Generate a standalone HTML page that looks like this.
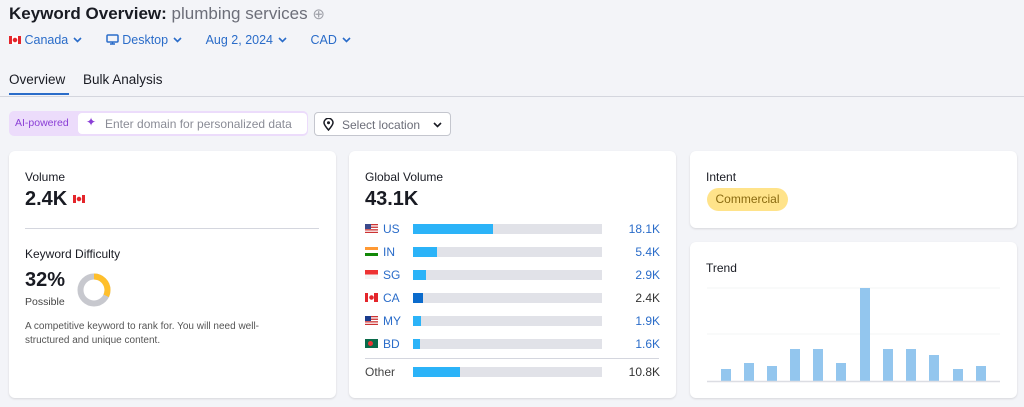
<!DOCTYPE html>
<html><head><meta charset="utf-8"><style>
*{margin:0;padding:0;box-sizing:border-box}
body{width:1024px;height:407px;background:#f3f4f8;font-family:"Liberation Sans",sans-serif;color:#191b23;position:relative;overflow:hidden}
.a{position:absolute}
.card{position:absolute;background:#fff;border-radius:6px;box-shadow:0 1px 2px rgba(0,0,0,.12)}
.blue{color:#2a6cc9}
.flag-ca{display:inline-block;width:12px;height:8px;background:radial-gradient(circle at 50% 50%,#e4252b 0 2px,transparent 2.5px),linear-gradient(90deg,#e4252b 0 3px,#fff 3px 9px,#e4252b 9px)}
.row{position:absolute;left:16px;width:295px;height:14px;font-size:12px}
.bar{position:absolute;left:48px;top:2px;width:189px;height:10px;background:#e1e2e8}
.bar i{position:absolute;left:0;top:0;height:10px;background:#2bb3f8}
.val{position:absolute;right:0;top:0;text-align:right;color:#2a6cc9}
.fl{position:absolute;left:0;top:2px;width:13px;height:9px}
.cc{position:absolute;left:18px;top:0;color:#2a6cc9}
.chev{display:inline-block;vertical-align:1px;margin-left:5px}
</style></head><body>
<div class="a" style="left:9px;top:4px;font-size:17px;font-weight:bold">Keyword Overview: <span style="color:#6c6e79;font-weight:normal">plumbing services</span> <span style="color:#a0a2aa;font-size:15px;font-weight:normal">⊕</span></div>
<div class="a blue" style="left:9px;top:33px;font-size:12.5px;white-space:nowrap">
<span class="flag-ca"></span> Canada<svg class="chev" width="9" height="6"><path d="M1 1l3.5 3.5L8 1" fill="none" stroke="#2a6cc9" stroke-width="1.6"/></svg>
<span style="margin-left:20px"><svg width="13" height="11" style="vertical-align:-1px"><rect x="1" y="1" width="11" height="7" rx="1" fill="none" stroke="#2a6cc9" stroke-width="1.5"/><path d="M4 10h5M6.5 8v2" stroke="#2a6cc9" stroke-width="1.5"/></svg> Desktop<svg class="chev" width="9" height="6"><path d="M1 1l3.5 3.5L8 1" fill="none" stroke="#2a6cc9" stroke-width="1.6"/></svg></span>
<span style="margin-left:20px">Aug 2, 2024<svg class="chev" width="9" height="6"><path d="M1 1l3.5 3.5L8 1" fill="none" stroke="#2a6cc9" stroke-width="1.6"/></svg></span>
<span style="margin-left:20px">CAD<svg class="chev" width="9" height="6"><path d="M1 1l3.5 3.5L8 1" fill="none" stroke="#2a6cc9" stroke-width="1.6"/></svg></span></div>
<div class="a" style="left:9px;top:72px;font-size:13.5px">Overview</div>
<div class="a" style="left:83px;top:72px;font-size:13.5px">Bulk Analysis</div>
<div class="a" style="left:9px;top:93px;width:60px;height:2px;background:#2a6cc9"></div>
<div class="a" style="left:0;top:96px;width:1024px;height:1px;background:#d4d6de"></div>
<div class="a" style="left:9px;top:111px;width:299px;height:25px;background:#ecdcfb;border-radius:5px"></div>
<div class="a" style="left:15px;top:117px;font-size:10.5px;color:#8a3ed6">AI-powered</div>
<div class="a" style="left:78px;top:113px;width:229px;height:21px;background:#fff;border-radius:4px;font-size:12px;color:#8a8c96;padding:4px 0 0 27px"><span style="position:absolute;left:8px;top:2px;color:#8a3ed6">✦</span>Enter domain for personalized data</div>
<div class="a" style="left:314px;top:112px;width:137px;height:24px;background:#fff;border:1px solid #c4c6ce;border-radius:4px;font-size:12px;color:#6c6e79;padding:5px 0 0 27px"><svg style="position:absolute;left:8px;top:5px" width="11" height="13"><path d="M5.5 12C2 8 1 6.5 1 4.8a4.5 4.5 0 0 1 9 0c0 1.7-1 3.2-4.5 7.2z" fill="none" stroke="#191b23" stroke-width="1.5"/><circle cx="5.5" cy="4.8" r="1.5" fill="#191b23"/></svg>Select location<svg style="position:absolute;right:8px;top:9px" width="9" height="6"><path d="M1 1l3.5 3.5L8 1" fill="none" stroke="#191b23" stroke-width="1.6"/></svg></div>

<div class="card" style="left:9px;top:151px;width:327px;height:247px">
<div class="a" style="left:16px;top:19px;font-size:12px">Volume</div>
<div class="a" style="left:16px;top:37px;font-size:20px;font-weight:bold">2.4K <span class="flag-ca" style="vertical-align:2px"></span></div>
<div class="a" style="left:16px;top:77px;width:294px;height:1px;background:#d4d6de"></div>
<div class="a" style="left:16px;top:96px;font-size:12px">Keyword Difficulty</div>
<div class="a" style="left:16px;top:118px;font-size:20px;font-weight:bold">32%</div>
<div class="a" style="left:16px;top:145px;font-size:10.5px;color:#444">Possible</div>
<svg class="a" style="left:67px;top:121px" width="36" height="36"><circle cx="18" cy="18" r="13.5" fill="none" stroke="#c7c8ce" stroke-width="6"/><circle cx="18" cy="18" r="13.5" fill="none" stroke="#ffbf2b" stroke-width="6" stroke-dasharray="27.1 100" transform="rotate(-90 18 18)"/></svg>
<div class="a" style="left:16px;top:169px;font-size:10px;color:#555;line-height:14px;width:270px">A competitive keyword to rank for. You will need well-structured and unique content.</div>
</div>

<div class="card" style="left:349px;top:151px;width:327px;height:247px">
<div class="a" style="left:16px;top:19px;font-size:12px">Global Volume</div>
<div class="a" style="left:16px;top:37px;font-size:20px;font-weight:bold">43.1K</div>
<div class="row" style="top:71px"><svg class="fl" viewBox="0 0 13 9"><rect width="13" height="9" fill="#c33"/><rect y="1.3" width="13" height="1.3" fill="#fff"/><rect y="3.9" width="13" height="1.3" fill="#fff"/><rect y="6.5" width="13" height="1.3" fill="#fff"/><rect width="6" height="5" fill="#3b4a8c"/></svg><span class="cc">US</span><div class="bar"><i style="width:80px"></i></div><span class="val">18.1K</span></div>
<div class="row" style="top:94px"><svg class="fl" viewBox="0 0 13 9"><rect width="13" height="3" fill="#f93"/><rect y="3" width="13" height="3" fill="#fff"/><rect y="6" width="13" height="3" fill="#128807"/></svg><span class="cc">IN</span><div class="bar"><i style="width:24px"></i></div><span class="val">5.4K</span></div>
<div class="row" style="top:117px"><svg class="fl" viewBox="0 0 13 9"><rect width="13" height="4.5" fill="#e33"/><rect y="4.5" width="13" height="4.5" fill="#f4f4f4"/></svg><span class="cc">SG</span><div class="bar"><i style="width:13px"></i></div><span class="val">2.9K</span></div>
<div class="row" style="top:140px"><span class="fl flag-ca" style="width:13px;height:9px"></span><span class="cc">CA</span><div class="bar"><i style="width:10px;background:#0b6bcc"></i></div><span class="val" style="color:#333">2.4K</span></div>
<div class="row" style="top:163px"><svg class="fl" viewBox="0 0 13 9"><rect width="13" height="9" fill="#c33"/><rect y="1.3" width="13" height="1.3" fill="#fff"/><rect y="3.9" width="13" height="1.3" fill="#fff"/><rect y="6.5" width="13" height="1.3" fill="#fff"/><rect width="6" height="5" fill="#1a3b8c"/></svg><span class="cc">MY</span><div class="bar"><i style="width:8px"></i></div><span class="val">1.9K</span></div>
<div class="row" style="top:186px"><svg class="fl" viewBox="0 0 13 9"><rect width="13" height="9" fill="#0a6a4a"/><circle cx="5.5" cy="4.5" r="2.5" fill="#e33"/></svg><span class="cc">BD</span><div class="bar"><i style="width:7px"></i></div><span class="val">1.6K</span></div>
<div class="a" style="left:16px;top:207px;width:294px;height:1px;background:#d4d6de"></div>
<div class="row" style="top:214px"><span style="position:absolute;left:0;color:#444">Other</span><div class="bar"><i style="width:47px"></i></div><span class="val" style="color:#333">10.8K</span></div>
</div>

<div class="card" style="left:690px;top:151px;width:327px;height:77px">
<div class="a" style="left:16px;top:19px;font-size:12px">Intent</div>
<div class="a" style="left:17px;top:37px;width:81px;height:23px;background:#ffe38a;border-radius:12px;font-size:12px;color:#8a6a10;text-align:center;line-height:23px">Commercial</div>
</div>
<div class="card" style="left:690px;top:242px;width:327px;height:156px">
<div class="a" style="left:16px;top:19px;font-size:12px">Trend</div>
<svg class="a" style="left:0;top:0" width="327" height="156">
<line x1="17" y1="46" x2="310" y2="46" stroke="#f3f4f6"/>
<line x1="17" y1="92" x2="310" y2="92" stroke="#f3f4f6"/>
<g fill="#93c6ee">
<rect x="31" y="127" width="10" height="12"/><rect x="54" y="121" width="10" height="18"/><rect x="77" y="124" width="10" height="15"/><rect x="100" y="107" width="10" height="32"/><rect x="123" y="107" width="10" height="32"/><rect x="146" y="121" width="10" height="18"/><rect x="170" y="46" width="10" height="93"/><rect x="193" y="107" width="10" height="32"/><rect x="216" y="107" width="10" height="32"/><rect x="239" y="113" width="10" height="26"/><rect x="263" y="127" width="10" height="12"/><rect x="286" y="124" width="10" height="15"/></g>
<line x1="17" y1="139.5" x2="310" y2="139.5" stroke="#dcdde3" stroke-width="1.5"/>
</svg>
</div>
</body></html>
